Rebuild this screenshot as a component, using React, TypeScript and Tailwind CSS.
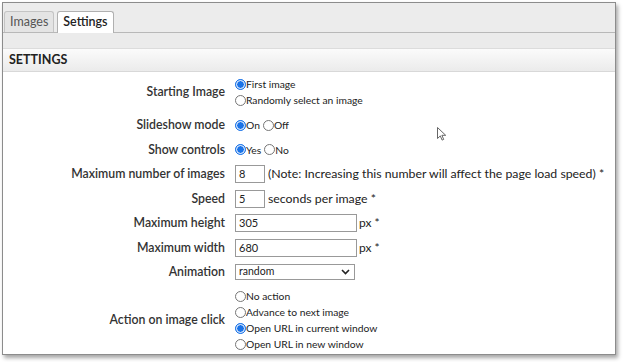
import React from 'react';

const font = { fontFamily: 'Lato, "Noto Sans", sans-serif' };

const Radio: React.FC<{ checked?: boolean; label: string }> = ({ checked, label }) => (
  <span className="inline-flex items-center">
    {checked ? (
      <span className="w-[11px] h-[11px] rounded-full bg-[#1a73e8] border border-[#1a73e8] flex items-center justify-center">
        <span className="w-[9px] h-[9px] rounded-full border-[1.5px] border-white bg-[#1a73e8]" />
      </span>
    ) : (
      <span className="w-[11px] h-[11px] rounded-full border border-[#767676] bg-white" />
    )}
    <span className="text-[10.3px] text-[#222] leading-none whitespace-nowrap">{label}</span>
  </span>
);

const Row: React.FC<{ label: string; h?: string; children: React.ReactNode }> = ({ label, h = 'h-[24.5px]', children }) => (
  <div className={`flex items-center shrink-0 ${h}`}>
    <div className="w-[222px] text-right text-[12.3px] font-semibold text-[#333] whitespace-nowrap">{label}</div>
    <div className="pl-[10px] flex items-center">{children}</div>
  </div>
);

const TextBox: React.FC<{ value: string; w: string }> = ({ value, w }) => (
  <div className={`${w} h-[18px] border border-[#999] bg-white text-[11px] text-[#222] px-[3px] flex items-center`}>{value}</div>
);

export default function App() {
  return (
    <div className="w-[624px] h-[362px] bg-white relative" style={font}>
      <div className="absolute left-[2px] top-[2px] w-[614px] h-[353px] border border-[#8c8c8c] shadow-[2px_3px_4px_rgba(0,0,0,0.35)] bg-white overflow-hidden">
        <div className="bg-[#ececec] h-[30px] flex items-end pl-[1px] gap-[3px] border-b border-[#b8b8b8]">
          <div className="h-[21px] px-[5px] flex items-center bg-[#e4e4e4] border border-[#c4c4c4] border-b-0 rounded-t-[3px] text-[12.5px] text-[#555]">Images</div>
          <div className="h-[22px] px-[5px] flex items-center bg-white border border-[#b0b0b0] border-b-0 rounded-t-[3px] text-[12.5px] font-semibold text-[#222] -mb-px">Settings</div>
        </div>
        <div className="bg-[#ebebeb] h-[16px] border-b border-[#dcdcdc]" />
        <div className="h-[23px] bg-gradient-to-b from-[#fbfbfb] to-[#ebebeb] border-b border-[#d8d8d8] flex items-center pl-[6px] text-[12.5px] font-bold text-[#222]">SETTINGS</div>
        <div className="flex flex-col">
          <Row label="Starting Image" h="h-[41px]">
            <div className="flex flex-col">
              <div className="h-[16px] flex items-center"><Radio checked label="First image" /></div>
              <div className="h-[16px] flex items-center"><Radio label="Randomly select an image" /></div>
            </div>
          </Row>
          <Row label="Slideshow mode">
            <Radio checked label="On" />
            <span className="w-[3px]" />
            <Radio label="Off" />
          </Row>
          <Row label="Show controls">
            <Radio checked label="Yes" />
            <span className="w-[3px]" />
            <Radio label="No" />
          </Row>
          <Row label="Maximum number of images">
            <TextBox value="8" w="w-[30px]" />
            <span className="ml-[3px] text-[12.3px] text-[#222] whitespace-nowrap">(Note: Increasing this number will affect the page load speed) *</span>
          </Row>
          <Row label="Speed">
            <TextBox value="5" w="w-[30px]" />
            <span className="ml-[3px] text-[12.3px] text-[#222] whitespace-nowrap">seconds per image *</span>
          </Row>
          <Row label="Maximum height">
            <TextBox value="305" w="w-[122px]" />
            <span className="ml-[2px] text-[12px] text-[#222]">px *</span>
          </Row>
          <Row label="Maximum width">
            <TextBox value="680" w="w-[122px]" />
            <span className="ml-[2px] text-[12px] text-[#222]">px *</span>
          </Row>
          <Row label="Animation">
            <div className="w-[120px] h-[16px] border border-[#999] bg-white text-[10.5px] text-[#222] pl-[3px] pr-[4px] flex items-center justify-between">
              <span>random</span>
              <svg width="9" height="6" viewBox="0 0 9 6"><path d="M1 1l3.5 3.5L8 1" fill="none" stroke="#222" strokeWidth="1.6" /></svg>
            </div>
          </Row>
          <Row label="Action on image click" h="h-[72px]">
            <div className="flex flex-col">
              <div className="h-[16px] flex items-center"><Radio label="No action" /></div>
              <div className="h-[16px] flex items-center"><Radio label="Advance to next image" /></div>
              <div className="h-[16px] flex items-center"><Radio checked label="Open URL in current window" /></div>
              <div className="h-[16px] flex items-center"><Radio label="Open URL in new window" /></div>
            </div>
          </Row>
        </div>
      </div>
      <svg className="absolute left-[437px] top-[127px]" width="10" height="14" viewBox="0 0 10 14">
        <path d="M0.5 0.5v11l2.8-2.6 1.8 4.2 1.6-0.7-1.8-4.1h3.8z" fill="white" stroke="#555" strokeWidth="0.9" />
      </svg>
    </div>
  );
}
